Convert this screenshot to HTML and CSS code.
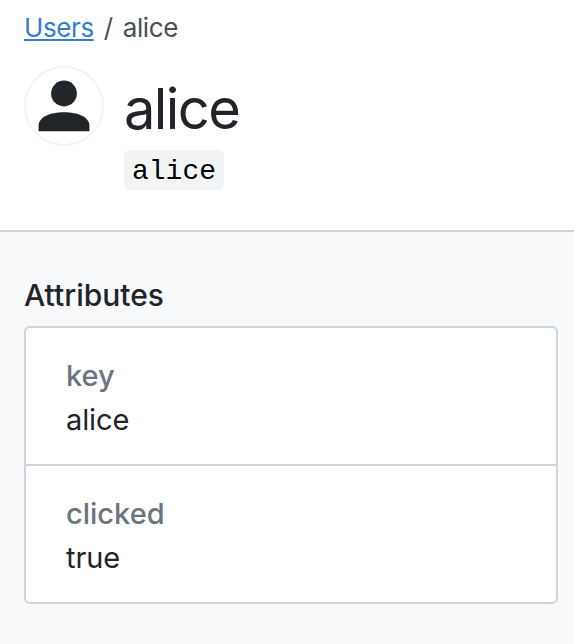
FILE: index.html
```html
<!DOCTYPE html>
<html lang="en">
<head>
<meta charset="utf-8">
<title>alice</title>
<link rel="stylesheet" href="styles.css">
</head>
<body>
<header class="header">
  <nav class="breadcrumb"><a class="crumb-link" href="#">Users</a><span class="separator">/</span><span class="crumb-current">alice</span></nav>
  <div class="profile">
    <div class="avatar">
      <svg width="76" height="76" viewBox="0 0 76 76" fill="#212529" aria-hidden="true">
        <circle cx="38" cy="25.5" r="12.9"/>
        <path d="M12.6 63.3V57.5C12.6 49 24 44.2 38 44.2S63.4 49 63.4 57.5V63.3Z"/>
      </svg>
    </div>
    <div class="identity">
      <h1 class="name">alice</h1>
      <code class="user-key">alice</code>
    </div>
  </div>
</header>
<main class="content">
  <h2 class="section-title">Attributes</h2>
  <dl class="attributes">
    <div class="attribute"><dt>key</dt><dd>alice</dd></div>
    <div class="attribute"><dt>clicked</dt><dd>true</dd></div>
  </dl>
</main>
</body>
</html>
```
FILE: styles.css
```css
* { box-sizing: border-box; }
body {
  margin: 0;
  min-height: 644px;
  background: #f8f9fb;
  color: #212529;
  font-family: Inter, "Liberation Sans", sans-serif;
}
.header {
  height: 232px;
  padding: 7px 24px 0;
  background: #fff;
  border-bottom: 2px solid #ced4da;
}
.breadcrumb {
  display: flex;
  height: 40px;
  font-size: 26px;
  line-height: 41px;
  letter-spacing: -0.4px;
  color: #495057;
}
.crumb-link {
  color: #347dce;
  text-decoration: underline;
  text-decoration-thickness: 2px;
  text-underline-offset: 2px;
  text-decoration-skip-ink: none;
}
.separator { width: 29px; text-align: center; }
.profile { display: flex; gap: 20px; margin-top: 19px; }
.avatar {
  flex: none;
  width: 80px;
  height: 80px;
  border: 2px solid #f1f3f5;
  border-radius: 50%;
}
.avatar svg { display: block; }
.name {
  height: 84px;
  margin: 0;
  font-size: 56px;
  font-weight: 400;
  line-height: 86px;
  letter-spacing: -1.6px;
}
.user-key {
  display: block;
  width: 100px;
  height: 40px;
  padding: 0 8px;
  border-radius: 6px;
  background: #f1f3f5;
  color: #000;
  font: 28px/44px "Liberation Mono", monospace;
}
.content { padding: 42px 16px 0 24px; }
.section-title {
  height: 44px;
  margin: 0 0 8px;
  font-size: 30px;
  font-weight: 500;
  line-height: 43px;
}
.attributes {
  margin: 0;
  border: 2px solid #ced4da;
  border-radius: 6px;
  background: #fff;
  font-size: 29px;
  line-height: 44px;
}
.attribute { height: 136px; padding: 26px 40px; }
.attribute + .attribute { height: 138px; border-top: 2px solid #ced4da; }
dt { color: #6c757d; font-weight: 500; }
dd { margin: 0; letter-spacing: -0.1px; }
```
